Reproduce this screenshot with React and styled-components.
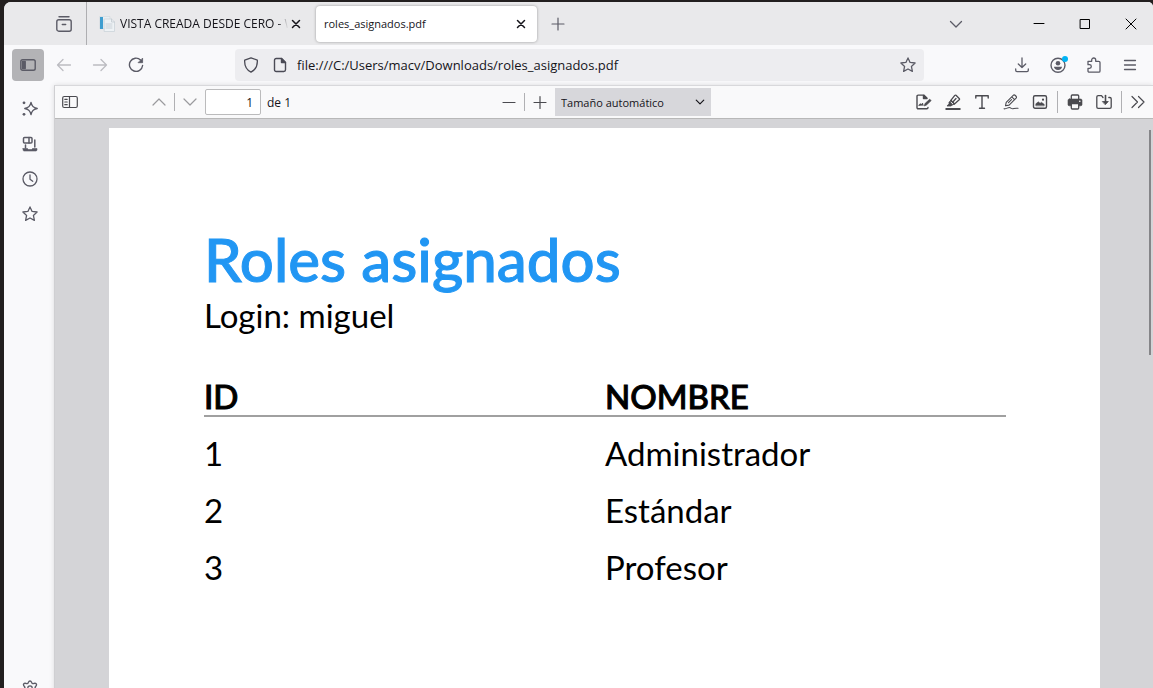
import React from "react";
import styled, { createGlobalStyle } from "styled-components";

const UI_FONT = '"Open Sans", "Noto Sans", sans-serif';
const DOC_FONT = 'Lato, "Open Sans", sans-serif';

const GlobalStyle = createGlobalStyle`
  * { box-sizing: border-box; }
  body {
    margin: 0;
    background: #221f1f;
    font-family: ${UI_FONT};
    font-size: 11px;
    color: #15141a;
    overflow: hidden;
  }
  button, input, select { font: inherit; color: inherit; margin: 0; }
`;

const Desktop = styled.div`
  height: 100vh;
  padding: 2px 0 0 4px;
  overflow: hidden;
`;

const BrowserWindow = styled.div`
  display: flex;
  flex-direction: column;
  min-height: calc(100vh + 16px);
  border-radius: 7px 5px 0 0;
  overflow: hidden;
  background: #f9f9fb;
`;

const Svg = styled.svg`
  display: block;
  flex: none;
  fill: none;
  stroke: currentColor;
  stroke-width: ${(p) => p.$weight || 1.2};
  stroke-linecap: round;
  stroke-linejoin: round;
`;

const Icon = ({ size = 16, weight, children }) => (
  <Svg width={size} height={size} viewBox="0 0 16 16" $weight={weight} aria-hidden="true">
    {children}
  </Svg>
);

const IconButton = styled.button`
  display: flex;
  align-items: center;
  justify-content: center;
  flex: none;
  width: ${(p) => p.$width || 32}px;
  height: ${(p) => p.$height || 32}px;
  padding: 0;
  border: 0;
  border-radius: 4px;
  background: ${(p) => (p.$active ? "#b3b3b6" : "transparent")};
  color: ${(p) => p.$color || "#5b5b66"};
`;

const TabBar = styled.header`
  display: flex;
  align-items: center;
  height: 43px;
  padding-left: 44px;
  background: #e9e9eb;
`;

const TabDivider = styled.span`
  align-self: stretch;
  width: 1px;
  margin-left: 6px;
  background: #aeaeb1;
`;

const Tab = styled.div`
  display: flex;
  align-items: center;
  width: 221px;
  height: 36px;
  padding: 0 8px;
  gap: 4px;
  border-radius: 4px;
  background: ${(p) => (p.$selected ? "#ffffff" : "transparent")};
  box-shadow: ${(p) => (p.$selected ? "0 0 3px rgba(0, 0, 0, 0.35)" : "none")};
`;

const BackgroundTab = styled(Tab)`
  width: 218px;
  margin: 0 4px 0 7px;
  padding: 0 8px 0 5px;
  gap: 0;
  font-size: 12px;

  > svg { margin-right: 5px; }
`;

const TabTitle = styled.span`
  flex: 1;
  min-width: 0;
  overflow: hidden;
  white-space: nowrap;
  ${(p) => p.$fade && "mask-image: linear-gradient(to right, #000 94%, transparent);"}
`;

const WindowControls = styled.div`
  display: flex;
  margin-left: auto;
`;

const TabsMenu = styled(IconButton)`
  margin-right: 44px;
`;

const NavBar = styled.nav`
  display: flex;
  align-items: center;
  gap: 4px;
  height: 40px;
  padding: 0 7px 0 8px;
  background: #f9f9fb;
`;

const AddressBar = styled.div`
  display: flex;
  flex: 1;
  align-items: center;
  height: 32px;
  margin: 0 78px 0 79px;
  border-radius: 4px;
  background: #ededf0;
  color: #4a4a55;
`;

const AddressInput = styled.input`
  flex: 1;
  min-width: 0;
  height: 28px;
  padding: 0 3px;
  border: 0;
  background: transparent;
  color: #15141a;
  font-size: 13px;
  outline: 0;
`;

const NavActions = styled.div`
  display: flex;
  gap: 4px;
`;

const Body = styled.div`
  display: flex;
  flex: 1;
`;

const Sidebar = styled.aside`
  display: flex;
  flex-direction: column;
  align-items: center;
  gap: 3px;
  width: 50px;
  padding: 8px 0 2px 2px;
  background: #f9f9fb;
`;

const SettingsButton = styled(IconButton)`
  margin-top: auto;
`;

const Viewer = styled.section`
  position: relative;
  display: flex;
  flex: 1;
  flex-direction: column;
  min-width: 0;
  border-top: 1px solid #d8d8db;
  border-left: 1px solid #cfcfd2;
  box-shadow: 0 0 5px rgba(0, 0, 0, 0.12);
  background: #d4d4d7;
`;

const PdfToolbar = styled.div`
  display: grid;
  grid-template-columns: 1fr auto 1fr;
  align-items: center;
  height: 33px;
  padding: 0 4px 0 0;
  border-bottom: 1px solid #b8b8b8;
  background: #f9f9fa;
`;

const ToolGroup = styled.div`
  display: flex;
  align-items: center;
  justify-content: ${(p) => p.$align || "flex-start"};
`;

const EditorTools = styled(ToolGroup)`
  padding-right: 3px;
`;

const MoreTools = styled(ToolGroup)`
  gap: 5px;
  padding-left: 5px;
`;

const Separator = styled.span`
  width: 1px;
  height: ${(p) => p.$height || 18}px;
  background: #b0b0b3;
`;

const PageButtons = styled(ToolGroup)`
  margin-left: 58px;
`;

const PageInput = styled.input`
  width: 56px;
  height: 26px;
  padding: 0 7px;
  border: 1px solid #bbbbbc;
  border-radius: 2px;
  background: #fff;
  text-align: right;
`;

const PageLabel = styled.label`
  display: flex;
  align-items: center;
  gap: 6px;
  font-size: 12px;
`;

const ZoomBox = styled.div`
  display: grid;
  align-items: center;
  width: 156px;
  height: 28px;
  background: #d7d7db;

  > * { grid-area: 1 / 1; }
  > svg { justify-self: end; margin-right: 5px; pointer-events: none; }
`;

const ZoomSelect = styled.select`
  appearance: none;
  width: 100%;
  height: 28px;
  padding: 0 24px 0 6px;
  border: 0;
  background: transparent;
`;

const Sheet = styled.article`
  flex: 1;
  margin: 9px 53px 0 54px;
  padding: 95px 94px 0 95px;
  background: #fff;
  color: #000;
  font-family: ${DOC_FONT};
  font-size: 33px;
  line-height: 40px;
`;

const Title = styled.h1`
  margin: 0;
  color: #2196f3;
  font-size: 60px;
  font-weight: 500;
  line-height: 72px;
  -webkit-text-stroke: 1px currentColor;
`;

const Login = styled.p`
  margin: 0;
`;

const RolesTable = styled.table`
  width: 100%;
  margin-top: 42px;
  border-collapse: collapse;
  table-layout: fixed;
  text-align: left;

  th {
    height: 38px;
    padding: 0;
    border-bottom: 2px solid #a0a0a0;
    font-weight: 500;
    line-height: 38px;
    -webkit-text-stroke: 1px currentColor;
  }
  td {
    height: 57px;
    padding: 16px 0 0;
  }
`;

const ScrollThumb = styled.div`
  position: absolute;
  top: 44px;
  right: 2px;
  width: 2px;
  height: 225px;
  background: #858588;
`;

const CloseGlyph = () => <path d="M4.5 4.5l7 7M11.5 4.5l-7 7" />;
const PlusGlyph = () => <path d="M8 2v12M2 8h12" />;
const StarGlyph = () => (
  <path d="M8 .9l2.1 4.5 5 .6-3.7 3.4 1 5L8 12l-4.4 2.4 1-5L.9 6l5-.6z" />
);

const roles = [
  { id: 1, name: "Administrador" },
  { id: 2, name: "Estándar" },
  { id: 3, name: "Profesor" },
];

function Tabs() {
  return (
    <TabBar>
      <IconButton aria-label="Firefox View">
        <Icon weight={1.4}>
          <path d="M3 .8h10" />
          <rect x=".8" y="3.7" width="14.4" height="11.5" rx="2" />
          <path d="M6.3 8.5h3.4" />
        </Icon>
      </IconButton>
      <TabDivider />
      <BackgroundTab>
        <Svg width="16" height="16" viewBox="0 0 16 16" aria-hidden="true">
          <path d="M1 .5h10v12H1z" fill="#e8eef2" stroke="#d0d8dd" strokeWidth=".6" />
          <path d="M1 1h3v12H1z" fill="#3f9ed0" stroke="none" />
          <path d="M5.5 3h7l3 3v9.500h-10z" fill="#eef2f5" stroke="#ccd3d9" strokeWidth=".8" />
          <path d="M12.500 3v3h3M7 8h6M7 10h6M7 12h6" stroke="#c2cad1" strokeWidth=".8" />
        </Svg>
        <TabTitle $fade>VISTA CREADA DESDE CERO - W</TabTitle>
        <IconButton $width={16} $height={24} $color="#15141a" aria-label="Cerrar pestaña">
          <Icon weight={1.5}><CloseGlyph /></Icon>
        </IconButton>
      </BackgroundTab>
      <Tab $selected>
        <TabTitle>roles_asignados.pdf</TabTitle>
        <IconButton $width={16} $height={24} $color="#15141a" aria-label="Cerrar pestaña">
          <Icon weight={1.5}><CloseGlyph /></Icon>
        </IconButton>
      </Tab>
      <IconButton $width={42} aria-label="Nueva pestaña">
        <Icon><PlusGlyph /></Icon>
      </IconButton>
      <WindowControls>
        <TabsMenu aria-label="Listar pestañas">
          <Icon weight={1.3}><path d="M2.500 5.500L8 11l5.500-5.500" /></Icon>
        </TabsMenu>
        <IconButton $width={46} $color="#000" aria-label="Minimizar">
          <Icon weight={1}><path d="M3 7.500h10" /></Icon>
        </IconButton>
        <IconButton $width={46} $color="#000" aria-label="Maximizar">
          <Icon weight={1}><rect x="3.500" y="3.500" width="9" height="9" /></Icon>
        </IconButton>
        <IconButton $width={45} $color="#000" aria-label="Cerrar">
          <Icon weight={1}><path d="M3 3l10 10M13 3L3 13" /></Icon>
        </IconButton>
      </WindowControls>
    </TabBar>
  );
}

function Navigation() {
  return (
    <NavBar>
      <IconButton $active aria-label="Barra lateral">
        <Icon weight={1.4}>
          <rect x=".8" y="2.700" width="14.400" height="10.600" rx="1.800" />
          <path d="M2.500 4.500h2.700v7H2.500z" fill="currentColor" />
        </Icon>
      </IconButton>
      <IconButton $color="#bcbcc1" aria-label="Atrás">
        <Icon weight={1.300}><path d="M14.500 8H1.500M7 2.500L1.500 8 7 13.500" /></Icon>
      </IconButton>
      <IconButton $color="#bcbcc1" aria-label="Adelante">
        <Icon weight={1.300}><path d="M1.500 8h13M9 2.500L14.500 8 9 13.500" /></Icon>
      </IconButton>
      <IconButton aria-label="Recargar">
        <Icon weight={1.400}>
          <path d="M12.600 3A6.600 6.600 0 1 0 14.600 8.500" />
          <path d="M14.600 1.500v4.200h-4.200z" fill="currentColor" strokeWidth=".8" />
        </Icon>
      </IconButton>
      <AddressBar>
        <IconButton $color="#4a4a55" aria-label="Protección">
          <Icon weight={1.300}>
            <path d="M8 .8l6.300 2.300c.4 5.300-1.700 9.700-6.300 12.100C3.400 12.800 1.300 8.400 1.700 3.100z" />
          </Icon>
        </IconButton>
        <IconButton $width={27} $color="#4a4a55" aria-label="Información del sitio">
          <Icon weight={1.400}>
            <path d="M3.200 1.500H8.500l4 4v7.300a1.700 1.700 0 0 1-1.700 1.700H3.200a1.700 1.700 0 0 1-1.700-1.700V3.200A1.700 1.700 0 0 1 3.200 1.500z" />
            <path d="M8.500 1.500v4h4z" fill="currentColor" />
          </Icon>
        </IconButton>
        <AddressInput
          aria-label="Dirección"
          defaultValue="file:///C:/Users/macv/Downloads/roles_asignados.pdf"
        />
        <IconButton aria-label="Añadir a marcadores">
          <Icon weight={1.300}><StarGlyph /></Icon>
        </IconButton>
      </AddressBar>
      <NavActions>
        <IconButton aria-label="Descargas">
          <Icon weight={1.300}>
            <path d="M8 1v9.500M4.300 7L8 10.500 11.700 7M1.700 12v1.300c0 .8.500 1.300 1.300 1.300h10c.8 0 1.300-.5 1.300-1.300V12" />
          </Icon>
        </IconButton>
        <IconButton aria-label="Cuenta">
          <Svg width="20" height="18" viewBox="-2 -1 20 18" $weight={1.400} aria-hidden="true">
            <circle cx="8" cy="8.200" r="7" />
            <circle cx="8" cy="6.200" r="2.300" fill="currentColor" stroke="none" />
            <path d="M4 9.800h8c0 1.900-1.600 3.100-4 3.100S4 11.700 4 9.800z" fill="currentColor" stroke="none" />
            <circle cx="15" cy="2" r="3" fill="#00b3f4" stroke="none" />
          </Svg>
        </IconButton>
        <IconButton aria-label="Extensiones">
          <Icon weight={1.300}>
            <path d="M2 4.300h3.700V3a2 2 0 0 1 4 0v1.300h3c.8 0 1.300.5 1.300 1.200V14c0 .7-.5 1.200-1.200 1.200H3.200c-.7 0-1.200-.5-1.200-1.200v-2.700h1.500a1.800 1.800 0 0 0 0-3.600H2z" />
          </Icon>
        </IconButton>
        <IconButton aria-label="Menú">
          <Icon weight={1.300}><path d="M2.500 3.500h11M2.500 8h11M2.500 12.500h11" /></Icon>
        </IconButton>
      </NavActions>
    </NavBar>
  );
}

function SideTools() {
  return (
    <Sidebar>
      <IconButton aria-label="Asistente">
        <Icon weight={1.400}>
          <path d="M9 1.500c.8 3.700 2.100 5 6.200 6-4.100.9-5.400 2.200-6.200 6-.8-3.800-2.100-5.100-6.200-6C6.900 6.500 8.200 5.200 9 1.500z" />
          <circle cx="2" cy="1.800" r="1.400" fill="currentColor" stroke="none" />
          <circle cx="2" cy="13.300" r="1.400" fill="currentColor" stroke="none" />
        </Icon>
      </IconButton>
      <IconButton aria-label="Pestañas sincronizadas">
        <Icon weight={1.500}>
          <rect x="1.500" y="1.500" width="8.500" height="5.600" rx="1" />
          <path d="M7 1.500v5.600M12.800 4v7M3.500 9v3" />
          <path d="M1 12.500h4.500l.8 1h3.400l.8-1H15v1.300c0 .8-.6 1.200-1.200 1.200H2.200c-.7 0-1.200-.5-1.200-1.200z" fill="currentColor" strokeWidth=".6" />
        </Icon>
      </IconButton>
      <IconButton aria-label="Historial">
        <Icon weight={1.300}>
          <circle cx="8" cy="8" r="7" />
          <path d="M8 4v4.300l2.700 2" />
        </Icon>
      </IconButton>
      <IconButton aria-label="Marcadores">
        <Icon weight={1.300}><StarGlyph /></Icon>
      </IconButton>
      <SettingsButton aria-label="Configuración">
        <Icon weight={1.300}>
          <path d="M6 3.200C6.600 1.900 6.700 1 8 1s1.400.9 2 2.200c.2.400.6.500 1 .4 1.400-.4 2.500-.8 3.300.3.800 1.200 0 1.800-1 2.900-.3.300-.3.700 0 1 1 1.200 1.800 1.900 1 3.100s-1.900.800-3.300.4c-.4-.1-.8.1-1 .500-.6 1.300-.7 2.200-2 2.200s-1.400-.9-2-2.200c-.2-.4-.6-.6-1-.5-1.400.4-2.500.8-3.300-.4s0-1.900 1-3.100c.3-.3.300-.7 0-1-1-1.100-1.800-1.700-1-2.900.8-1.100 1.900-.7 3.300-.3.400.1.800 0 1-.4z" />
          <circle cx="8" cy="8" r="2.200" />
        </Icon>
      </SettingsButton>
    </Sidebar>
  );
}

const TOOL = "#4a4a4f";

function Toolbar() {
  return (
    <PdfToolbar>
      <ToolGroup>
        <IconButton $width={30} $height={28} $color={TOOL} aria-label="Panel de páginas">
          <Icon weight={1.200}>
            <rect x=".7" y="2.500" width="14.600" height="11" rx="1.500" />
            <path d="M7.500 2.500v11M2.800 5.300h2.400M2.800 8h2.400M2.800 10.700h2.400" />
          </Icon>
        </IconButton>
        <PageButtons>
          <IconButton $width={31} $height={28} $color="#9a9a9d" aria-label="Página anterior">
            <Icon><path d="M2 11l6-6 6 6" /></Icon>
          </IconButton>
          <Separator />
          <IconButton $width={30} $height={28} $color="#9a9a9d" aria-label="Página siguiente">
            <Icon><path d="M2 5l6 6 6-6" /></Icon>
          </IconButton>
        </PageButtons>
        <PageLabel>
          <PageInput defaultValue="1" aria-label="Página" />
          de 1
        </PageLabel>
      </ToolGroup>
      <ToolGroup>
        <IconButton $width={31} $height={28} $color={TOOL} aria-label="Reducir">
          <Icon><path d="M2 8.500h12" /></Icon>
        </IconButton>
        <Separator />
        <IconButton $width={30} $height={28} $color={TOOL} aria-label="Aumentar">
          <Icon><path d="M8 2.500v12M2 8.500h12" /></Icon>
        </IconButton>
        <ZoomBox>
          <ZoomSelect aria-label="Zoom" defaultValue="auto">
            <option value="auto">Tamaño automático</option>
          </ZoomSelect>
          <Icon size={12} weight={1.600}><path d="M3 5.500L8 10.500 13 5.500" /></Icon>
        </ZoomBox>
      </ToolGroup>
      <ToolGroup $align="flex-end">
        <EditorTools>
          <IconButton $width={29} $height={28} $color={TOOL} aria-label="Firmar">
            <Icon weight={1.400}>
              <path d="M12 13.500c0 .8-.4 1.200-1.200 1.200H2.200c-.8 0-1.200-.4-1.200-1.200V2.300c0-.8.400-1.200 1.200-1.200h5.600l3 3" />
              <path d="M7.500 1.500v3h3.500z" fill="currentColor" />
              <path d="M3 11.500l1.500-1.500.5 1.500 1.500-2 .5 2" strokeWidth="1.100" />
              <path d="M8.500 11.500l.6-2 4.600-4.300 1.400 1.400-4.600 4.300z" fill="currentColor" strokeWidth=".8" />
            </Icon>
          </IconButton>
          <IconButton $width={29} $height={28} $color={TOOL} aria-label="Resaltar">
            <Icon weight={1.300}>
              <path d="M11 1.300l3.200 3.200c.4.400.4.900 0 1.300L9.500 10 5.800 6.300l4-4.900c.4-.4.800-.4 1.200-.1z" />
              <path d="M8.300 7.500l2.700-3" />
              <path d="M5.800 6.300L4 8.300v1.500L2 12h4l1-.8 2.500-1.200z" fill="currentColor" strokeWidth=".8" />
              <path d="M6 8.200l1.700 1.600" stroke="#f9f9fa" strokeWidth="1" />
              <path d="M.5 15h15" strokeWidth="2" strokeLinecap="butt" />
            </Icon>
          </IconButton>
          <IconButton $width={29} $height={28} $color={TOOL} aria-label="Texto">
            <Icon weight={1.400}><path d="M1.800 4V1.800h12.400V4M8 1.800v12.400M5.500 14.200h5" /></Icon>
          </IconButton>
          <IconButton $width={29} $height={28} $color={TOOL} aria-label="Dibujar">
            <Icon weight={1.100}>
              <path d="M2.500 11.800l.7-3.500 7-7c1.300-1.300 4.200 1.500 2.900 2.900l-7 6.900zM8.700 2.800l2.900 2.900M5.500 8.700l3-3" />
              <path d="M1 14.800c2.500.3 3.500-1.400 5.500-1.300 1.500.2 1.500 1.400 3.500 1.200 1.500-.3 2.500-.8 5-.4" />
            </Icon>
          </IconButton>
          <IconButton $width={29} $height={28} $color={TOOL} aria-label="Imagen">
            <Icon weight={1.400}>
              <rect x="1.500" y="1.700" width="13" height="12.600" rx="1.500" />
              <path d="M3.800 11.500V9.800l2.500-2 1.800 1.500 1.300-1 2.800 2v1.200z" fill="currentColor" strokeWidth=".5" />
              <circle cx="11" cy="5.700" r="1.100" fill="currentColor" stroke="none" />
            </Icon>
          </IconButton>
        </EditorTools>
        <Separator $height={22} />
        <IconButton $width={34} $height={28} $color={TOOL} aria-label="Imprimir">
          <Icon weight={1.300}>
            <path d="M4.300 5V2c0-.6.300-1 1-1h5.400c.7 0 1 .4 1 1v3" />
            <path d="M2.500 5h11c1 0 1.500.6 1.500 1.500v4c0 .8-.5 1.300-1.300 1.300H2.300c-.8 0-1.300-.5-1.300-1.300v-4C1 5.600 1.500 5 2.500 5z" fill="currentColor" strokeWidth=".6" />
            <path d="M4.300 9.700h7.400V14c0 .6-.4 1-1 1H5.300c-.6 0-1-.4-1-1z" fill="#f9f9fa" />
            <circle cx="12.800" cy="7.300" r=".8" fill="#fff" stroke="none" />
          </Icon>
        </IconButton>
        <IconButton $width={24} $height={28} $color={TOOL} aria-label="Guardar">
          <Icon weight={1.300}>
            <path d="M7 3.500L5.500 1.700H2.200C1.300 1.700.8 2.200.8 3v10c0 .8.500 1.300 1.400 1.300h11.600c.9 0 1.400-.5 1.400-1.300V4.700c0-.8-.5-1.200-1.400-1.200h-1" />
            <path d="M9.500 1.500v7" strokeWidth="1.600" />
            <path d="M6.700 7.500h5.600L9.500 10.500z" fill="currentColor" strokeWidth=".8" />
          </Icon>
        </IconButton>
        <MoreTools>
          <Separator $height={22} />
          <IconButton $width={22} $height={28} $color={TOOL} aria-label="Más herramientas">
            <Icon><path d="M2 2.500L7.500 8 2 13.500M8.500 2.500L14 8l-5.500 5.500" /></Icon>
          </IconButton>
        </MoreTools>
      </ToolGroup>
    </PdfToolbar>
  );
}

export default function App() {
  return (
    <Desktop>
      <GlobalStyle />
      <BrowserWindow>
        <Tabs />
        <Navigation />
        <Body>
          <SideTools />
          <Viewer>
            <Toolbar />
            <Sheet>
              <Title>Roles asignados</Title>
              <Login>Login: miguel</Login>
              <RolesTable>
                <thead>
                  <tr>
                    <th scope="col">ID</th>
                    <th scope="col">NOMBRE</th>
                  </tr>
                </thead>
                <tbody>
                  {roles.map((role) => (
                    <tr key={role.id}>
                      <td>{role.id}</td>
                      <td>{role.name}</td>
                    </tr>
                  ))}
                </tbody>
              </RolesTable>
            </Sheet>
            <ScrollThumb />
          </Viewer>
        </Body>
      </BrowserWindow>
    </Desktop>
  );
}
